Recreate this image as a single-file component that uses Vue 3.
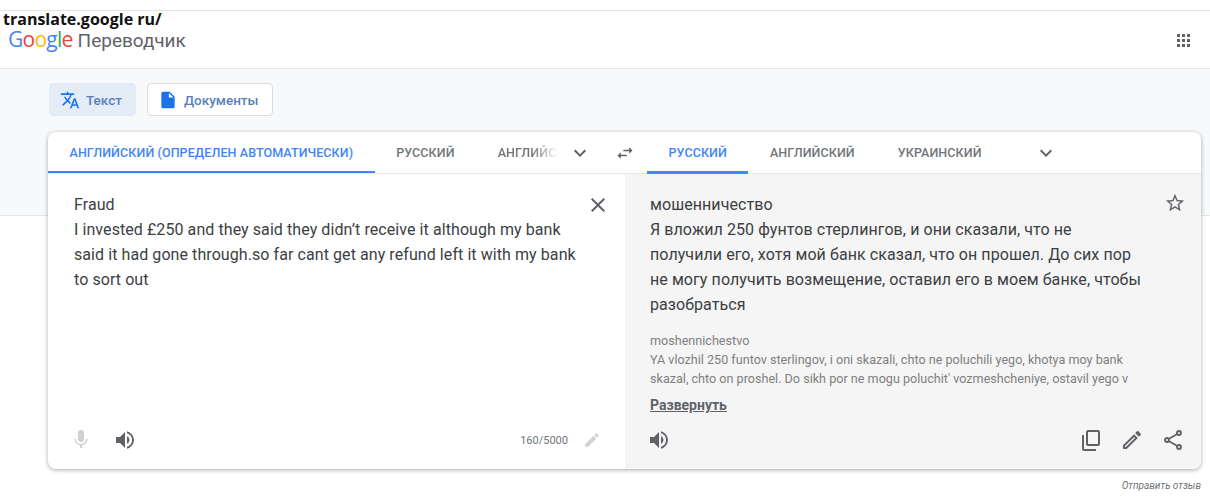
<script setup>
const sourceTabs = [
  { label: 'АНГЛИЙСКИЙ (ОПРЕДЕЛЕН АВТОМАТИЧЕСКИ)', active: true },
  { label: 'РУССКИЙ' },
]
const targetTabs = [
  { label: 'РУССКИЙ', active: true },
  { label: 'АНГЛИЙСКИЙ' },
  { label: 'УКРАИНСКИЙ' },
]
</script>

<template>
  <div class="page">
    <div class="url-note">translate.google ru/</div>
    <header class="topbar">
      <div class="logo">
        <span class="logo-word"><i class="blue">G</i><i class="red">o</i><i class="yellow">o</i><i class="blue">g</i><i class="green">l</i><i class="red">e</i></span>
        <span class="logo-name">Переводчик</span>
      </div>
      <svg class="apps" width="16" height="16" viewBox="0 0 16 16" fill="#5f6368">
        <rect x="1" y="1" width="3" height="3" /><rect x="6" y="1" width="3" height="3" /><rect x="11" y="1" width="3" height="3" />
        <rect x="1" y="6" width="3" height="3" /><rect x="6" y="6" width="3" height="3" /><rect x="11" y="6" width="3" height="3" />
        <rect x="1" y="11" width="3" height="3" /><rect x="6" y="11" width="3" height="3" /><rect x="11" y="11" width="3" height="3" />
      </svg>
    </header>

    <section class="band">
      <div class="modes">
        <button class="mode mode-active">
          <svg width="20" height="20" viewBox="0 0 24 24" fill="#1a73e8"><path d="M12.87 15.07l-2.54-2.51.03-.03A17.52 17.52 0 0 0 14.07 6H17V4h-7V2H8v2H1v2h11.17A15.7 15.7 0 0 1 9 11.35 15.7 15.7 0 0 1 6.69 8h-2c.73 1.63 1.73 3.17 2.98 4.56l-5.09 5.02L4 19l5-5 3.11 3.11.76-2.04zM18.5 10h-2L12 22h2l1.12-3h4.75L21 22h2l-4.5-12zm-2.62 7l1.62-4.33L19.12 17h-3.24z" /></svg>
          Текст
        </button>
        <button class="mode">
          <svg width="20" height="20" viewBox="0 0 24 24" fill="#1a73e8"><path d="M14 2H6a2 2 0 0 0-2 2v16a2 2 0 0 0 2 2h12a2 2 0 0 0 2-2V8l-6-6zm-1 7V3.5L18.5 9H13z" /></svg>
          Документы
        </button>
      </div>

      <div class="card">
        <div class="tabs">
          <div class="tabs-side tabs-source">
            <span v-for="tab in sourceTabs" :key="tab.label" class="tab" :class="{ active: tab.active }">{{ tab.label }}</span>
            <span class="tab tab-fade">АНГЛИЙСКИЙ</span>
            <svg class="chevron" width="24" height="24" viewBox="0 0 24 24" fill="#5f6368"><path d="M16.6 8.6L12 13.2 7.4 8.6 6 10l6 6 6-6z" /></svg>
          </div>
          <svg class="swap" width="20" height="20" viewBox="0 0 24 24" fill="#5f6368"><path d="M6.99 11L3 15l3.99 4v-3H14v-2H6.99v-3zM21 9l-3.99-4v3H10v2h7.01v3L21 9z" /></svg>
          <div class="tabs-side tabs-target">
            <span v-for="tab in targetTabs" :key="tab.label" class="tab" :class="{ active: tab.active }">{{ tab.label }}</span>
            <svg class="chevron chevron-target" width="24" height="24" viewBox="0 0 24 24" fill="#5f6368"><path d="M16.6 8.6L12 13.2 7.4 8.6 6 10l6 6 6-6z" /></svg>
          </div>
        </div>

        <div class="panes">
          <div class="pane pane-source">
            <div class="source-row">
              <p class="body-text body-source">Fraud<br />I invested £250 and they said they didn’t receive it although my bank said it had gone through.so far cant get any refund left it with my bank to sort out</p>
              <svg class="close" width="24" height="24" viewBox="0 0 24 24" fill="#5f6368"><path d="M19 6.4L17.6 5 12 10.6 6.4 5 5 6.4 10.6 12 5 17.6 6.4 19 12 13.4 17.6 19 19 17.6 13.4 12z" /></svg>
            </div>
            <div class="pane-foot pane-foot-source">
              <svg width="24" height="24" viewBox="0 0 24 24" fill="#cfd1d3"><path d="M12 14a3 3 0 0 0 3-3V5a3 3 0 0 0-6 0v6a3 3 0 0 0 3 3z" /><path d="M17 11a5 5 0 0 1-10 0H5.5c0 3.1 2.3 5.7 5.5 6.2V20h2v-2.8c3.200-.5 5.500-3.100 5.500-6.200H17z" /></svg>
              <svg class="speak" width="24" height="24" viewBox="0 0 24 24" fill="#5f6368"><path d="M3 9v6h4l5 5V4L7 9H3zm13.500 3A4.500 4.500 0 0 0 14 7.970v8.050A4.470 4.470 0 0 0 16.500 12zM14 3.230v2.060a7 7 0 0 1 0 13.420v2.060a9 9 0 0 0 0-17.540z" /></svg>
              <span class="counter">160/5000</span>
              <svg class="pencil-off" width="18" height="18" viewBox="0 0 24 24" fill="#cfd1d3"><path d="M3 17.250V21h3.750L17.810 9.940l-3.750-3.750L3 17.250zM20.710 7.040a1 1 0 0 0 0-1.410l-2.340-2.340a1 1 0 0 0-1.410 0l-1.830 1.830 3.750 3.750 1.830-1.830z" /></svg>
            </div>
          </div>

          <div class="pane pane-target">
            <div class="source-row">
              <p class="body-text body-target">мошенничество<br />Я вложил 250 фунтов стерлингов, и они сказали, что не<br />получили его, хотя мой банк сказал, что он прошел. До сих пор<br />не могу получить возмещение, оставил его в моем банке, чтобы<br />разобраться</p>
              <svg class="star" width="22" height="22" viewBox="0 0 24 24" fill="#5f6368"><path d="M22 9.240l-7.190-.62L12 2 9.190 8.630 2 9.240l5.460 4.730L5.820 21 12 17.270 18.180 21l-1.630-7.030L22 9.240zM12 15.400l-3.760 2.270 1-4.280-3.320-2.880 4.380-.38L12 6.100l1.710 4.040 4.380.38-3.320 2.880 1 4.280L12 15.400z" /></svg>
            </div>
            <p class="translit">moshennichestvo<br />YA vlozhil 250 funtov sterlingov, i oni skazali, chto ne poluchili yego, khotya moy bank skazal, chto on proshel. Do sikh por ne mogu poluchit' vozmeshcheniye, ostavil yego v</p>
            <a class="expand">Развернуть</a>
            <div class="pane-foot pane-foot-target">
              <svg width="24" height="24" viewBox="0 0 24 24" fill="#5f6368"><path d="M3 9v6h4l5 5V4L7 9H3zm13.500 3A4.500 4.500 0 0 0 14 7.970v8.050A4.470 4.470 0 0 0 16.500 12zM14 3.230v2.060a7 7 0 0 1 0 13.420v2.060a9 9 0 0 0 0-17.540z" /></svg>
              <div class="actions">
                <svg width="24" height="24" viewBox="0 0 24 24" fill="#5f6368"><path d="M9 2h10a2 2 0 0 1 2 2v12a2 2 0 0 1-2 2H9a2 2 0 0 1-2-2V4a2 2 0 0 1 2-2zm0 2v12h10V4H9z" fill-rule="evenodd" /><path d="M3 7h2v14h12v2H5a2 2 0 0 1-2-2V7z" /></svg>
                <svg width="24" height="24" viewBox="0 0 24 24" fill="#5f6368"><path d="M14.060 9.020l.92.920L5.920 19H5v-.920l9.060-9.060M17.660 3a1 1 0 0 0-.700.290l-1.830 1.830 3.750 3.750 1.830-1.830a1 1 0 0 0 0-1.410l-2.340-2.340a1 1 0 0 0-.710-.290zm-3.600 3.190L3 17.250V21h3.750L17.810 9.940l-3.750-3.750z" /></svg>
                <svg width="24" height="24" viewBox="0 0 24 24" fill="#5f6368"><path d="M18 16.080c-.76 0-1.440.3-1.960.77L8.910 12.700c.05-.23.090-.46.090-.7s-.04-.47-.09-.7l7.050-4.110A2.990 2.990 0 0 0 21 5a3 3 0 1 0-6 0c0 .24.040.47.090.7L8.040 9.810A2.990 2.990 0 0 0 3 12a3 3 0 0 0 5.040 2.190l7.120 4.160c-.05.21-.08.43-.08.65A2.920 2.920 0 1 0 18 16.080zM18 4a1 1 0 1 1 0 2 1 1 0 0 1 0-2zM6 13a1 1 0 1 1 0-2 1 1 0 0 1 0 2zm12 7a1 1 0 1 1 0-2 1 1 0 0 1 0 2z" /></svg>
              </div>
            </div>
          </div>
        </div>
      </div>
    </section>

    <div class="feedback">Отправить отзыв</div>
  </div>
</template>

<style>
html,
body {
  margin: 0;
  background: #fff;
}
</style>

<style scoped>
.page {
  position: relative;
  width: 1210px;
  height: 498px;
  overflow: hidden;
  padding-top: 10px;
  box-sizing: border-box;
  background: #fff;
  font-family: Roboto, "Liberation Sans", sans-serif;
  color: #3c4043;
}

.url-note {
  position: absolute;
  left: 3px;
  top: 11px;
  font-family: "Open Sans", sans-serif;
  font-size: 16px;
  font-weight: 700;
  line-height: 17px;
  color: #111;
}

.topbar {
  display: flex;
  align-items: center;
  justify-content: space-between;
  height: 58px;
  box-sizing: border-box;
  padding: 2px 18px 0 8px;
  border-top: 1px solid #e4e4e4;
}

.logo {
  display: flex;
  align-items: baseline;
  gap: 5px;
  line-height: 22px;
  margin-top: -2px;
}

.logo-word {
  font-family: "Open Sans", sans-serif;
  font-size: 21px;
  letter-spacing: -0.75px;
}

.logo-word i {
  font-style: normal;
}

.blue { color: #4285f4; }
.red { color: #ea4335; }
.yellow { color: #fbbc05; }
.green { color: #34a853; }

.logo-name {
  font-size: 19px;
  color: #5f6368;
}

.apps {
  display: block;
}

.band {
  height: 148px;
  box-sizing: border-box;
  padding: 14px 9px 0 48px;
  background: #f8f9fa;
  border-top: 1px solid #e4e4e4;
  border-bottom: 1px solid #e4e4e4;
}

.modes {
  display: flex;
  gap: 11px;
  margin-bottom: 16px;
  padding-left: 1px;
}

.mode {
  display: flex;
  align-items: center;
  gap: 6px;
  height: 33px;
  padding: 0 14px 0 10px;
  border: 1px solid #dadce0;
  border-radius: 4px;
  background: #fff;
  font: 500 13.5px Roboto, sans-serif;
  color: #5a7fbc;
}

.mode-active {
  padding-right: 13px;
  border-color: #e2eaf6;
  background: #e4ecf8;
}

.card {
  width: 1153px;
  height: 337px;
  display: flex;
  flex-direction: column;
  overflow: hidden;
  border-radius: 8px;
  background: #fff;
  box-shadow: 0 1px 4px rgba(60, 64, 67, 0.45);
}

.tabs {
  display: flex;
  align-items: stretch;
  height: 42px;
  flex: none;
  box-sizing: border-box;
  border-bottom: 1px solid #e6e6e6;
}

.tabs-side {
  display: flex;
  align-items: stretch;
  position: relative;
}

.tabs-source {
  width: 553px;
  overflow: hidden;
}

.tabs-target {
  flex: 1;
  margin-left: 12px;
}

.tab {
  display: flex;
  align-items: center;
  flex: none;
  padding: 2px 21.5px 0;
  font-size: 12.5px;
  font-weight: 500;
  letter-spacing: 0.1px;
  color: #70757a;
  border-bottom: 3px solid transparent;
  margin-bottom: -1px;
}

.tab.active {
  color: #4285f4;
  border-bottom-color: #4285f4;
}

.tab-fade {
  width: 70px;
  overflow: hidden;
  white-space: nowrap;
  padding-right: 0;
  -webkit-mask-image: linear-gradient(to right, #000 60%, transparent 90%);
  mask-image: linear-gradient(to right, #000 60%, transparent 90%);
}

.chevron {
  align-self: center;
  flex: none;
}

.chevron-target {
  margin-left: 31px;
}

.swap {
  align-self: center;
  flex: none;
  margin-left: 14px;
}

.panes {
  display: flex;
  flex: 1;
  min-height: 0;
}

.pane {
  display: flex;
  flex-direction: column;
  box-sizing: border-box;
  position: relative;
}

.pane-source {
  width: 577px;
  padding: 18px 15px 17px 26px;
}

.pane-target {
  flex: 1;
  padding: 18px 16px 17px 25px;
  background: #f5f5f5;
}

.source-row {
  display: flex;
  justify-content: space-between;
  align-items: flex-start;
  gap: 8px;
}

.body-text {
  margin: 0;
  width: 505px;
  font-size: 16px;
  line-height: 25px;
  color: #3c4043;
}

.body-source {
  letter-spacing: 0.075px;
}

.body-target {
  letter-spacing: 0.08px;
}

.close {
  flex: none;
  margin-top: 1px;
}

.star {
  flex: none;
  margin-right: -1px;
}

.translit {
  margin: 14px 0 0;
  width: 490px;
  font-size: 12.6px;
  line-height: 19px;
  color: #808080;
}

.expand {
  margin-top: 8px;
  align-self: flex-start;
  font-size: 14px;
  font-weight: 700;
  line-height: 18px;
  color: #5f6368;
  text-decoration: underline;
}

.pane-foot {
  display: flex;
  align-items: center;
  margin-top: auto;
}

.pane-foot-source {
  margin-left: -5px;
  margin-right: 9px;
}

.speak {
  margin-left: 20px;
}

.counter {
  margin-left: auto;
  font-size: 11px;
  color: #70757a;
}

.pencil-off {
  margin-left: 15px;
}

.pane-foot-target {
  justify-content: space-between;
  margin-left: -3px;
}

.actions {
  display: flex;
  gap: 17px;
}

.feedback {
  position: absolute;
  right: 9px;
  top: 480px;
  font-family: Roboto, sans-serif;
  font-size: 10px;
  font-style: italic;
  color: #70757a;
}
</style>
